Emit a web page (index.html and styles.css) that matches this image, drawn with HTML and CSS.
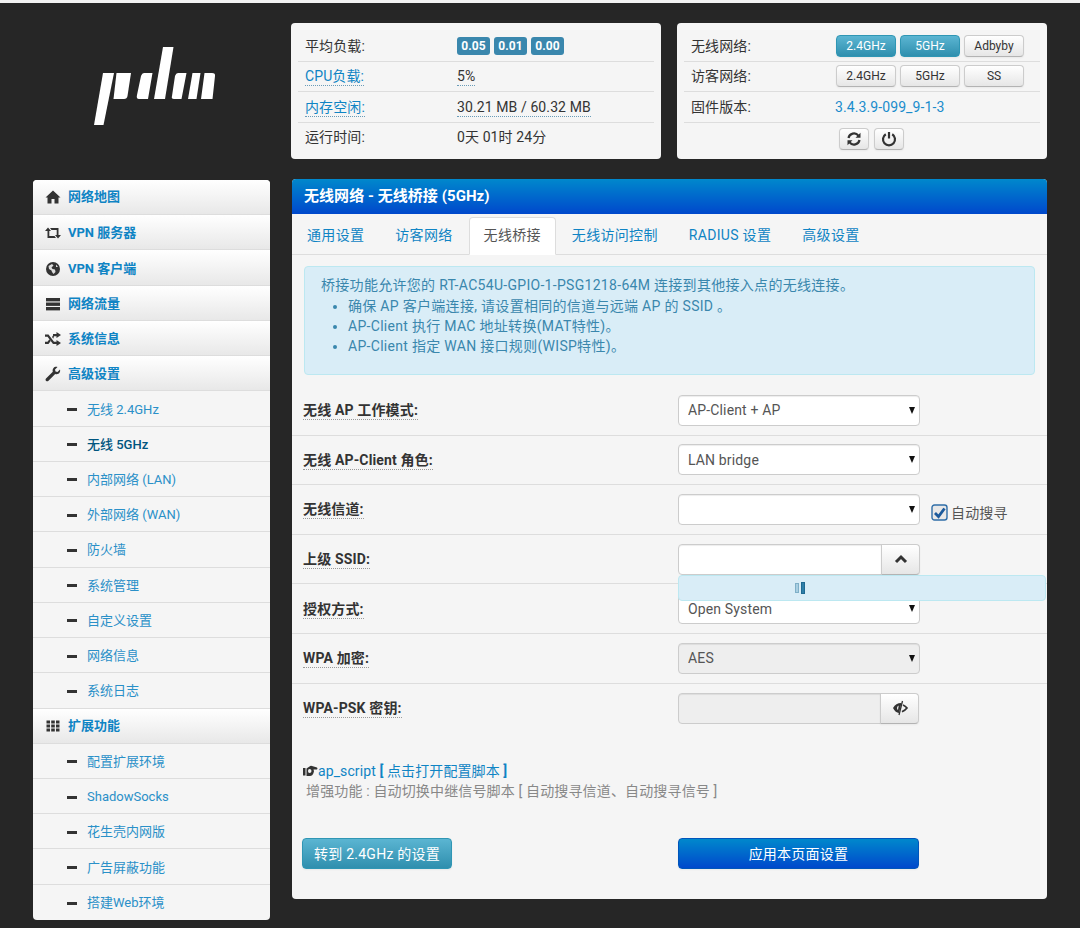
FILE: index.html
```html
<!DOCTYPE html>
<html lang="zh-CN">

<head>
    <meta charset="UTF-8">
    <title>无线网络 - 无线桥接 (5GHz)</title>
    <link rel="stylesheet" href="styles.css">
</head>

<body>
    <div class="page">
        <!-- Logo -->
        <div class="logo">
            <svg width="128" height="84" viewBox="90 44 128 84" fill="#fff">
                <polygon points="103,73 114,73 103.500,125 94,125" />
                <path d="M116.500,73 H131 L127.500,96 Q127,99 124,99 H113.500 Z" />
                <path d="M144,73 H152.500 L148,99 H139 Q136,99 137,95 L141,76 Q142,73 144,73 Z" />
                <polygon points="163,47 173.500,47 165,99 154,99" />
                <path d="M178,73 H186.500 L181.500,99 H174 Q171,99 172,96 L175,76 Q176,73 178,73 Z" />
                <polygon points="192.500,73 200.500,73 196.500,99 188,99" />
                <path d="M204.500,73 H212 Q215.500,73 215,76 L212.500,99 H201 Z" />
            </svg>
        </div>

        <!-- Status panels -->
        <div class="status">
            <div class="status-panel">
                <div class="status-row">
                    <span class="status-label">平均负载:</span>
                    <span class="badges">
                        <span class="badge">0.05</span>
                        <span class="badge">0.01</span>
                        <span class="badge">0.00</span>
                    </span>
                </div>
                <div class="status-row">
                    <span class="status-label"><a href="#" class="hint-link">CPU负载:</a></span>
                    <span class="hint-value">5%</span>
                </div>
                <div class="status-row">
                    <span class="status-label"><a href="#" class="hint-link">内存空闲:</a></span>
                    <span class="hint-value">30.21 MB / 60.32 MB</span>
                </div>
                <div class="status-row no-line uptime">
                    <span class="status-label">运行时间:</span>
                    <span>0天 01时 24分</span>
                </div>
            </div>

            <div class="status-panel status-right">
                <div class="status-row">
                    <span class="status-label">无线网络:</span>
                    <span class="btn-group">
                        <button class="btn btn-info">2.4GHz</button>
                        <button class="btn btn-info">5GHz</button>
                        <button class="btn">Adbyby</button>
                    </span>
                </div>
                <div class="status-row">
                    <span class="status-label">访客网络:</span>
                    <span class="btn-group">
                        <button class="btn">2.4GHz</button>
                        <button class="btn">5GHz</button>
                        <button class="btn">SS</button>
                    </span>
                </div>
                <div class="status-row">
                    <span class="status-label">固件版本:</span>
                    <a href="#" class="firmware">3.4.3.9-099_9-1-3</a>
                </div>
                <div class="status-row no-line power-row">
                    <button class="btn btn-icon">
                        <svg width="16" height="16" viewBox="0 0 16 16" fill="none" stroke="#333" stroke-width="2.200">
                            <path d="M2.500 7 A5.600 5.600 0 0 1 12.400 4.600" />
                            <path d="M13.500 9 A5.600 5.600 0 0 1 3.600 11.400" />
                            <path d="M14.500 1.800 V6.800 H9.500 Z" fill="#333" stroke="none" />
                            <path d="M1.500 14.200 V9.200 H6.500 Z" fill="#333" stroke="none" />
                        </svg>
                    </button>
                    <button class="btn btn-icon">
                        <svg width="16" height="16" viewBox="0 0 16 16" fill="none" stroke="#333" stroke-width="2.200">
                            <path d="M4.800 3.200 A6 6 0 1 0 11.200 3.200" />
                            <path d="M8 1 V7.500" />
                        </svg>
                    </button>
                </div>
            </div>
        </div>

        <!-- Side menu -->
        <ul class="menu">
            <li class="menu-head flat">
                <svg class="menu-icon" width="16" height="16" viewBox="0 0 16 16" fill="#333">
                    <path d="M8 1.500 L15.500 8.500 H13.500 V14.500 H9.500 V10 H6.500 V14.500 H2.500 V8.500 H0.500 Z" />
                </svg>
                <a href="#">网络地图</a>
            </li>
            <li class="menu-head">
                <svg class="menu-icon" width="16" height="16" viewBox="0 0 16 16" fill="#333">
                    <path d="M0 6 L3 2.500 L6 6 H4.300 V11 H9.500 L11 13 H2.500 V6 Z" />
                    <path d="M16 10 L13 13.500 L10 10 H11.700 V5 H6.500 L5 3 H13.500 V10 Z" />
                </svg>
                <a href="#">VPN 服务器</a>
            </li>
            <li class="menu-head">
                <svg class="menu-icon" width="16" height="16" viewBox="0 0 16 16">
                    <circle cx="8" cy="8" r="7" fill="#333" />
                    <path d="M3.500 5 L7 3 L8.500 4.500 L6.500 6.500 L7.500 8 L10 8.500 L10.500 11 L8.500 13 L7 11 L6.500 9.500 L4 8 Z M11 3.500 L13 6 L11 6 Z" fill="#ddd" />
                </svg>
                <a href="#">VPN 客户端</a>
            </li>
            <li class="menu-head">
                <svg class="menu-icon" width="16" height="16" viewBox="0 0 16 16" fill="#333">
                    <rect x="1" y="2" width="14" height="3.400" />
                    <rect x="1" y="6.500" width="14" height="3.400" />
                    <rect x="1" y="11" width="14" height="3.400" />
                </svg>
                <a href="#">网络流量</a>
            </li>
            <li class="menu-head">
                <svg class="menu-icon" width="16" height="16" viewBox="0 0 16 16" fill="#333">
                    <path d="M0 3.500 H3.500 L9 10.800 H11.500 V9 L16 12 L11.500 15 V13 H8 L2.500 5.700 H0 Z" />
                    <path d="M0 10.800 H2.500 L4.400 8.300 L5.700 10.100 L3.500 13 H0 Z M7 5.900 L8 4.600 V3 H11.500 V1 L16 4 L11.500 7 V5.200 H9 L8.300 7.700 Z" />
                </svg>
                <a href="#">系统信息</a>
            </li>
            <li class="menu-head">
                <svg class="menu-icon" width="16" height="16" viewBox="0 0 16 16" fill="#333">
                    <path d="M15 3.500 L12.500 6 L10.500 5.500 L10 3.500 L12.500 1 C9.500 0.200 7 2.500 7.800 5.800 L1 12.500 C0.200 13.500 0.500 14.500 1.200 15 C2 15.500 2.800 15.300 3.500 14.700 L10.200 8 C13.500 9 15.800 6.500 15 3.500 Z" />
                </svg>
                <a href="#">高级设置</a>
            </li>
            <li class="menu-item"><i class="dash"></i><a href="#">无线 2.4GHz</a></li>
            <li class="menu-item active"><i class="dash"></i><a href="#">无线 5GHz</a></li>
            <li class="menu-item"><i class="dash"></i><a href="#">内部网络 (LAN)</a></li>
            <li class="menu-item"><i class="dash"></i><a href="#">外部网络 (WAN)</a></li>
            <li class="menu-item"><i class="dash"></i><a href="#">防火墙</a></li>
            <li class="menu-item"><i class="dash"></i><a href="#">系统管理</a></li>
            <li class="menu-item"><i class="dash"></i><a href="#">自定义设置</a></li>
            <li class="menu-item"><i class="dash"></i><a href="#">网络信息</a></li>
            <li class="menu-item"><i class="dash"></i><a href="#">系统日志</a></li>
            <li class="menu-head flat">
                <svg class="menu-icon" width="16" height="16" viewBox="0 0 16 16" fill="#333">
                    <path d="M1.500 2.500 h3.500 v3 h-3.500 Z M6.200 2.500 h3.600 v3 h-3.600 Z M11 2.500 h3.500 v3 h-3.500 Z M1.500 6.500 h3.500 v3 h-3.500 Z M6.200 6.500 h3.600 v3 h-3.600 Z M11 6.500 h3.500 v3 h-3.500 Z M1.500 10.500 h3.500 v3 h-3.500 Z M6.200 10.500 h3.600 v3 h-3.600 Z M11 10.500 h3.500 v3 h-3.500 Z" />
                </svg>
                <a href="#">扩展功能</a>
            </li>
            <li class="menu-item"><i class="dash"></i><a href="#">配置扩展环境</a></li>
            <li class="menu-item"><i class="dash"></i><a href="#">ShadowSocks</a></li>
            <li class="menu-item"><i class="dash"></i><a href="#">花生壳内网版</a></li>
            <li class="menu-item"><i class="dash"></i><a href="#">广告屏蔽功能</a></li>
            <li class="menu-item"><i class="dash"></i><a href="#">搭建Web环境</a></li>
        </ul>

        <!-- Main panel -->
        <div class="panel">
            <div class="panel-title">无线网络 - 无线桥接 (5GHz)</div>

            <ul class="tabs">
                <li><a href="#">通用设置</a></li>
                <li><a href="#">访客网络</a></li>
                <li class="active"><a href="#">无线桥接</a></li>
                <li><a href="#">无线访问控制</a></li>
                <li><a href="#">RADIUS 设置</a></li>
                <li><a href="#">高级设置</a></li>
            </ul>

            <div class="alert">
                桥接功能允许您的 RT-AC54U-GPIO-1-PSG1218-64M 连接到其他接入点的无线连接。
                <ul>
                    <li>确保 AP 客户端连接, 请设置相同的信道与远端 AP 的 SSID 。</li>
                    <li>AP-Client 执行 MAC 地址转换(MAT特性)。</li>
                    <li>AP-Client 指定 WAN 接口规则(WISP特性)。</li>
                </ul>
            </div>

            <form>
                <div class="form-row">
                    <label class="form-label"><span>无线 AP 工作模式:</span></label>
                    <div class="select-wrap">
                        <select>
                            <option>AP-Client + AP</option>
                        </select>
                    </div>
                </div>
                <div class="form-row">
                    <label class="form-label"><span>无线 AP-Client 角色:</span></label>
                    <div class="select-wrap">
                        <select>
                            <option>LAN bridge</option>
                        </select>
                    </div>
                </div>
                <div class="form-row">
                    <label class="form-label"><span>无线信道:</span></label>
                    <div class="select-wrap">
                        <select></select>
                    </div>
                    <span class="auto-search">
                        <svg width="17" height="17" viewBox="0 0 17 17">
                            <rect x="1" y="1" width="15" height="15" rx="2.500" fill="#e8e8e8" stroke="#2f6ea8" stroke-width="1.400" />
                            <path d="M4 9 L7.500 12.500 L13.500 4.500" fill="none" stroke="#1c5a9c" stroke-width="2.800" />
                        </svg>
                        自动搜寻
                    </span>
                </div>
                <div class="form-row">
                    <label class="form-label"><span>上级 SSID:</span></label>
                    <div class="input-group">
                        <input type="text">
                        <button type="button" class="btn addon">
                            <svg width="14" height="14" viewBox="0 0 14 14" fill="none" stroke="#333" stroke-width="3">
                                <path d="M2 10 L7 5 L12 10" />
                            </svg>
                        </button>
                        <!-- Dropdown list still loading -->
                        <div class="ssid-list">
                            <i class="loader-bar"></i><i class="loader-bar on"></i>
                        </div>
                    </div>
                </div>
                <div class="form-row">
                    <label class="form-label"><span>授权方式:</span></label>
                    <div class="select-wrap">
                        <select>
                            <option>Open System</option>
                        </select>
                    </div>
                </div>
                <div class="form-row">
                    <label class="form-label"><span>WPA 加密:</span></label>
                    <div class="select-wrap">
                        <select disabled>
                            <option>AES</option>
                        </select>
                    </div>
                </div>
                <div class="form-row no-line">
                    <label class="form-label"><span>WPA-PSK 密钥:</span></label>
                    <div class="input-group short">
                        <input type="text" disabled>
                        <button type="button" class="btn addon">
                            <svg width="16" height="16" viewBox="0 0 16 16">
                                <path d="M1 8 Q4 2.800 9.500 3 L7 13 Q3.500 12.800 1 8 Z M6.700 5.500 Q5 6 5 8 Q5 9.500 6 10 Z" fill="#333" fill-rule="evenodd" />
                                <path d="M11 5 Q13.500 6.200 15 8 Q13.500 10 10 11.800" fill="none" stroke="#333" stroke-width="1.700" />
                                <path d="M10.500 1 L7 15" stroke="#333" stroke-width="1.300" />
                            </svg>
                        </button>
                    </div>
                </div>
            </form>

            <div class="script-note">
                <div class="script-link">
                    <svg class="hand" width="15" height="12" viewBox="0 0 15 12" fill="#333">
                        <path d="M0 3 H2.500 V10.500 H0 Z" />
                        <path d="M3.500 3.500 L6.500 1.500 Q7.500 0.500 9 1 L14 2.500 Q15 3.500 14 4.500 L10.500 4.500 Q11.500 6 10.500 8 Q9.500 11 7 11 H3.500 Z M6.500 4 Q8.500 4 8.500 6 Q8.500 8 6.500 8 Q5 8 5 6 Q5 4 6.500 4 Z" fill-rule="evenodd" />
                    </svg><a href="#">ap_script <b>[</b> 点击打开配置脚本 <b>]</b></a>
                </div>
                <div class="script-desc">增强功能 : 自动切换中继信号脚本 [ 自动搜寻信道、自动搜寻信号 ]</div>
            </div>

            <div class="actions">
                <button class="btn btn-info btn-large">转到 2.4GHz 的设置</button>
                <button class="btn btn-primary btn-large">应用本页面设置</button>
            </div>
        </div>
    </div>
</body>

</html>
```

FILE: styles.css
```css
/* General Styles */
* {
    box-sizing: border-box;
}

body {
    margin: 0;
    border-top: 3px solid #f2f2f2;
    background-color: #262626;
    color: #333333;
    font-family: Roboto, "Noto Sans CJK SC", sans-serif;
    font-size: 14px;
    line-height: 20px;
    letter-spacing: 0.100px;
}

a {
    color: #0f84c4;
    text-decoration: none;
}

ul {
    margin: 0;
    padding: 0;
    list-style: none;
}

.page {
    display: grid;
    grid-template-columns: 237px 755px;
    column-gap: 22px;
    row-gap: 20px;
    padding: 20px 33px 8px;
}

/* Logo */
.logo {
    padding: 21px 0 0 57px;
}

.logo svg {
    display: block;
}

/* Status panels */
.status {
    display: flex;
    gap: 16px;
    height: 136px;
    margin-left: -1px;
}

.status-panel {
    width: 370px;
    padding: 8px 7px 0;
    background-color: #f5f5f5;
    border-radius: 4px;
}

.status-row {
    display: flex;
    align-items: center;
    height: 30.500px;
    padding-left: 7px;
    border-bottom: 1px solid #dddddd;
}

.status-row.no-line {
    border-bottom: none;
}

.status-row.uptime {
    padding-bottom: 2px;
}

.status-label {
    width: 152px;
    flex-shrink: 0;
}

.status-right .status-label {
    width: 144px;
}

.hint-link,
.hint-value {
    display: inline-block;
    margin-top: 1px;
    border-bottom: 1px dotted #6a9cb8;
    line-height: 18px;
}

.badges {
    display: flex;
    gap: 4px;
}

.badge {
    width: 33px;
    height: 18px;
    background-color: #3a87ad;
    border-radius: 3px;
    color: #ffffff;
    font-size: 12px;
    font-weight: 700;
    line-height: 18px;
    text-align: center;
}

.firmware {
    color: #1a8ccc;
}

/* Buttons */
.btn {
    display: inline-flex;
    align-items: center;
    justify-content: center;
    padding: 0;
    background: linear-gradient(180deg, #ffffff 0%, #e6e6e6 100%);
    border: 1px solid #cccccc;
    border-bottom-color: #b3b3b3;
    border-radius: 4px;
    box-shadow: 0 1px 2px rgba(0, 0, 0, 0.05);
    color: #333333;
    font-family: inherit;
    font-size: 12px;
    line-height: 18px;
}

.btn-info {
    background: linear-gradient(180deg, #5bb5d2 0%, #2f8fae 100%);
    border-color: #2f96b4;
    color: #ffffff;
}

.btn-primary {
    background: linear-gradient(180deg, #0088cc 0%, #0048cc 100%);
    border-color: #0055bb;
    color: #ffffff;
}

.btn-group {
    display: flex;
    gap: 4px;
    margin-left: 1px;
}

.btn-group .btn {
    width: 60px;
    height: 22px;
}

.status-right .power-row {
    gap: 5px;
    padding: 2px 0 0 155px;
}

.btn-icon {
    width: 30px;
    height: 22px;
}

.btn-large {
    height: 31px;
    font-size: 14px;
    letter-spacing: 0.250px;
}

/* Side menu */
.menu {
    height: 740px;
    margin-top: 1px;
    overflow: hidden;
    background-color: #f5f5f5;
    border-radius: 4px;
    letter-spacing: 0;
}

.menu-head,
.menu-item {
    display: flex;
    align-items: center;
    height: 35.240px;
    padding-top: 2px;
}

.menu-head {
    padding-left: 12px;
    background: linear-gradient(180deg, #ffffff 0%, #e8e8e8 100%);
    border-bottom: 1px solid #dddddd;
    font-size: 13px;
    font-weight: 700;
}

.menu-head.flat {
    padding-top: 0;
}

.menu-icon {
    flex-shrink: 0;
    margin-right: 7px;
}

.menu-item {
    padding-left: 34px;
    border-bottom: 1px solid #dddddd;
    font-size: 13px;
}

.menu-item:last-child {
    border-bottom: none;
}

.menu-item a {
    color: #2a90c8;
}

.menu-item.active a {
    color: #00557f;
    font-weight: 500;
}

.dash {
    width: 10px;
    height: 3px;
    margin-right: 10px;
    background-color: #333333;
}

/* Main panel */
.panel {
    position: relative;
    height: 720px;
    background-color: #f5f5f5;
    border-radius: 4px;
}

.panel-title {
    height: 35px;
    padding: 7px 12px;
    background: linear-gradient(180deg, #0088cc 0%, #0048cc 100%);
    border-radius: 4px 4px 0 0;
    color: #ffffff;
    font-size: 15px;
    font-weight: 700;
    letter-spacing: 0.050px;
}

.tabs {
    display: flex;
    gap: 1px;
    align-items: flex-end;
    height: 41px;
    border-bottom: 1px solid #dddddd;
    letter-spacing: 0.320px;
}

.tabs a {
    display: block;
    height: 38px;
    margin-bottom: -1px;
    padding: 7px 14px;
    border: 1px solid transparent;
}

.tabs .active a {
    background-color: #ffffff;
    border-color: #dddddd #dddddd #ffffff;
    border-radius: 4px 4px 0 0;
    color: #555555;
}

.alert {
    height: 109px;
    margin: 11px 12px 11px;
    padding: 8px 16px;
    background-color: #d9edf7;
    border: 1px solid #bce8f1;
    border-radius: 4px;
    color: #3a87ad;
    letter-spacing: 0.300px;
}

.alert ul {
    margin-top: 1px;
    padding-left: 27px;
    list-style: disc;
}

/* Form */
.form-row {
    display: flex;
    align-items: center;
    height: 49.600px;
    padding-left: 11px;
    border-bottom: 1px solid #dddddd;
}

.form-row.no-line {
    border-bottom: none;
}

.form-label {
    width: 375px;
    flex-shrink: 0;
    color: #333333;
    font-weight: 700;
    letter-spacing: 0.150px;
}

.form-label span {
    display: inline-block;
    margin-top: 1px;
    border-bottom: 1px dotted #999999;
    line-height: 18px;
}

.select-wrap {
    position: relative;
    width: 242px;
    height: 31px;
}

.select-wrap::after {
    content: "";
    position: absolute;
    top: 12px;
    right: 5px;
    border-top: 7px solid #111111;
    border-left: 3px solid transparent;
    border-right: 3px solid transparent;
}

select,
input[type="text"] {
    display: block;
    width: 100%;
    height: 31px;
    padding: 0 9px;
    appearance: none;
    background-color: #ffffff;
    border: 1px solid #cccccc;
    border-radius: 4px;
    box-shadow: inset 0 1px 1px rgba(0, 0, 0, 0.075);
    color: #555555;
    font-family: inherit;
    font-size: 14px;
    letter-spacing: 0.150px;
}

select:disabled,
input[type="text"]:disabled {
    background-color: #eeeeee;
    opacity: 1;
}

.auto-search {
    display: flex;
    align-items: center;
    gap: 3px;
    margin: 7px 0 0 11px;
    color: #555555;
    letter-spacing: 0.150px;
}

.input-group {
    position: relative;
    display: flex;
    width: 242px;
    height: 31px;
}

.input-group.short {
    width: 241px;
}

.input-group input[type="text"] {
    flex: 1;
    border-radius: 4px 0 0 4px;
}

.addon {
    width: 39px;
    flex-shrink: 0;
    margin-left: -1px;
    border-radius: 0 4px 4px 0;
}

/* Sits over the rows below the SSID field */
.ssid-list {
    position: absolute;
    top: 31px;
    left: 0;
    z-index: 2;
    display: flex;
    align-items: center;
    gap: 2px;
    width: 368px;
    height: 26px;
    padding-left: 116px;
    background-color: #d9edf7;
    border: 1px solid #bce8f1;
    border-radius: 4px;
}

.loader-bar {
    width: 4px;
    height: 10px;
    background-color: #a9cfe2;
    border: 1px solid #7fb0c8;
}

.loader-bar.on {
    height: 12px;
    background-color: #2f7fa8;
    border-color: #1f6a92;
}

/* Script note */
.script-note {
    padding: 28px 0 0 11px;
    letter-spacing: 0.150px;
}

.script-link {
    letter-spacing: 0.100px;
}

.script-note a {
    color: #0f84c4;
}

.hand {
    vertical-align: -1px;
}

.script-desc {
    padding-left: 3px;
    color: #888888;
}

/* Bottom buttons */
.actions {
    display: flex;
    margin-top: 37px;
    padding-left: 10px;
}

.actions .btn-info {
    width: 150px;
    margin-right: 226px;
}

.actions .btn-primary {
    width: 241px;
}
```
